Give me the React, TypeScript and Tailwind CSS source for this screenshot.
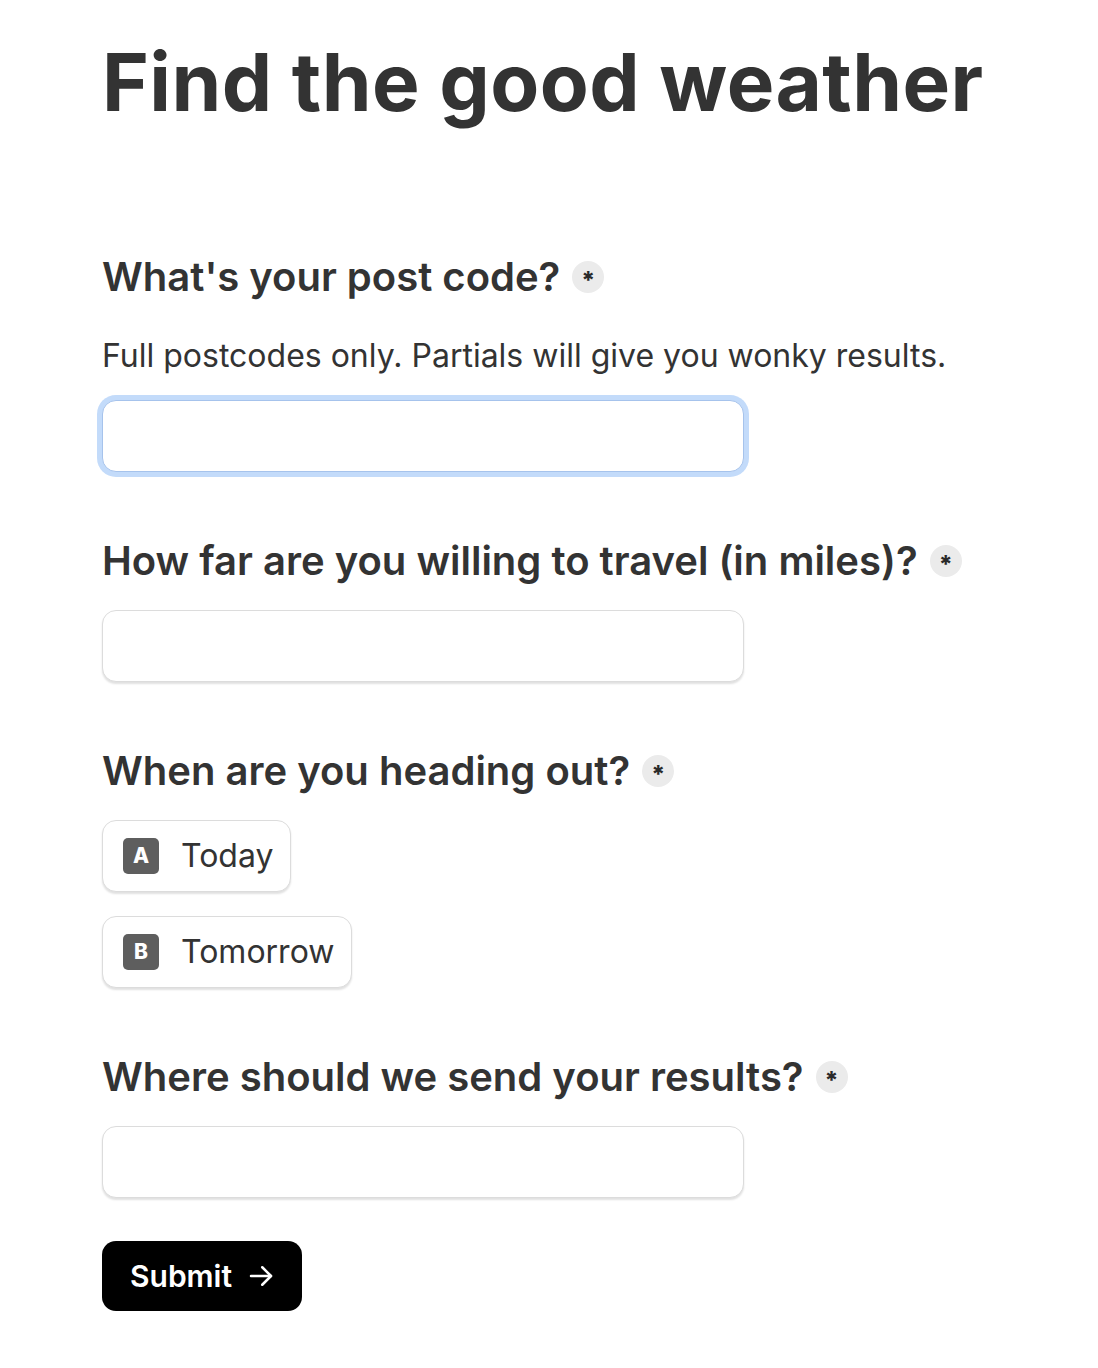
// @ts-nocheck
import React from 'react';

const Required = () => (
  <span className="ml-3 inline-flex h-8 w-8 shrink-0 items-center justify-center rounded-full bg-[#ebebeb] text-[24px] font-extrabold leading-none text-[#2a2a2a]">
    <span className="mt-[8px]">*</span>
  </span>
);

const Question = ({ children }) => (
  <h2 className="flex items-center text-[40px] font-semibold leading-[52px] text-[#333]">
    {children}
    <Required />
  </h2>
);

const TextField = ({ focused = false }) => (
  <input
    type="text"
    className={
      'block h-[72px] w-[642px] rounded-[14px] border bg-white px-5 text-[32px] outline-none ' +
      (focused
        ? 'border-[#a6c3ec] ring-[5px] ring-[#c3dbfa]'
        : 'border-[#dcdcdc] shadow-[0_2px_2px_rgba(0,0,0,0.12)]')
    }
  />
);

const Choice = ({ letter, label }) => (
  <button
    type="button"
    className="flex h-[72px] items-center gap-[22px] rounded-[14px] border border-[#dcdcdc] bg-white pl-5 pr-[17px] shadow-[0_2px_2px_rgba(0,0,0,0.12)]"
  >
    <span className="flex h-9 w-9 items-center justify-center rounded-[5px] bg-[#5e5e5e] text-[21px] font-extrabold text-white">
      {letter}
    </span>
    <span className="text-[32px] leading-none text-[#333]">{label}</span>
  </button>
);

export default function App() {
  return (
    <div className="min-h-screen bg-white font-['Inter',sans-serif] text-[#333]">
      <form className="px-[102px] pt-[38px] pb-14" onSubmit={(e) => e.preventDefault()}>
        <h1 className="text-[80px] font-bold leading-[88px] tracking-[0.4px] text-[#333]">
          Find the good weather
        </h1>

        <section className="mt-[125px]">
          <Question>What's your post code?</Question>
          <p className="mt-[31px] text-[32px] leading-[44px] text-[#333]">
            Full postcodes only. Partials will give you wonky results.
          </p>
          <div className="mt-[22px]">
            <TextField focused />
          </div>
        </section>

        <section className="mt-[63px]">
          <Question>How far are you willing to travel (in miles)?</Question>
          <div className="mt-[23px]">
            <TextField />
          </div>
        </section>

        <section className="mt-[63px]">
          <Question>When are you heading out?</Question>
          <div className="mt-[23px] flex flex-col items-start gap-6">
            <Choice letter="A" label="Today" />
            <Choice letter="B" label="Tomorrow" />
          </div>
        </section>

        <section className="mt-[63px]">
          <Question>Where should we send your results?</Question>
          <div className="mt-[23px]">
            <TextField />
          </div>
        </section>

        <button
          type="submit"
          className="mt-[43px] flex h-[70px] items-center gap-[14px] rounded-[14px] bg-black pl-7 pr-[26px] text-[30px] font-semibold text-white"
        >
          Submit
          <svg width="30" height="30" viewBox="0 0 24 24" fill="none" stroke="currentColor" strokeWidth="2" strokeLinecap="round" strokeLinejoin="round">
            <path d="M4 12h16" />
            <path d="M13 5l7 7-7 7" />
          </svg>
        </button>
      </form>
    </div>
  );
}
